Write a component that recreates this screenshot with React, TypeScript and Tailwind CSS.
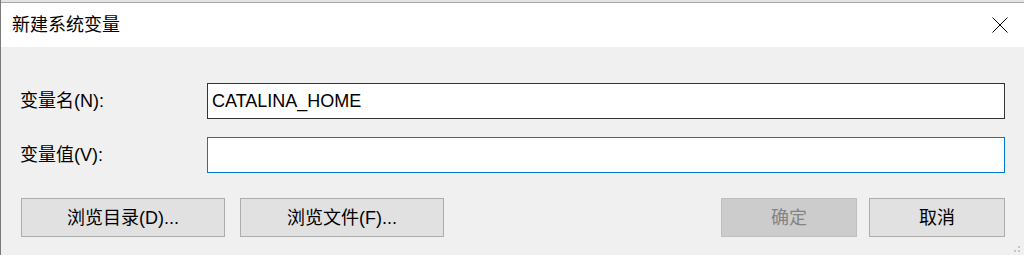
const font = { fontFamily: '"Liberation Sans", "Noto Sans CJK SC", sans-serif' };

const Btn = ({ label, w, disabled }: { label: string; w: string; disabled?: boolean }) => (
  <button
    className={
      disabled
        ? `${w} h-[39px] border border-[#bfbfbf] bg-[#cccccc] text-[#838383] text-[18px] leading-none`
        : `${w} h-[39px] border border-[#adadad] bg-[#e1e1e1] text-black text-[18px] leading-none`
    }
  >
    {label}
  </button>
);

export default function App() {
  return (
    <div
      className="relative w-[1024px] h-[255px] overflow-hidden bg-[#f0f0f0] border-l border-[#7a7a7a]"
      style={font}
    >
      {/* strip of the window behind */}
      <div className="h-[2px] bg-[#e4e4e4] border-b border-[#a8a8a8] box-content" />

      {/* Title bar */}
      <div className="h-[44px] bg-white flex items-center justify-between pl-[11px] pr-[16px]">
        <span className="text-[18px] text-black">新建系统变量</span>
        <svg width="16" height="16" viewBox="0 0 16 16" className="mr-[0px]">
          <path d="M0.5 0.5 L15.5 15.5 M15.5 0.5 L0.5 15.5" stroke="#000" strokeWidth="1" fill="none" />
        </svg>
      </div>

      {/* Body */}
      <div className="pt-[36px] pl-[19px] pr-[19px] flex flex-col">
        <div className="flex items-center h-[36px]">
          <span className="w-[187px] text-[18px] text-black">变量名(N):</span>
          <div className="flex-1 h-[36px] bg-white border border-[#333333] flex items-center pl-[4px] text-[18px] text-black">
            CATALINA_HOME
          </div>
        </div>
        <div className="flex items-center h-[36px] mt-[18px]">
          <span className="w-[187px] text-[18px] text-black">变量值(V):</span>
          <div className="flex-1 h-[36px] bg-white border border-[#0078d7]" />
        </div>
        <div className="flex items-center mt-[25px] pl-[1px]">
          <div className="flex gap-[15px]">
            <Btn label="浏览目录(D)..." w="w-[204px]" />
            <Btn label="浏览文件(F)..." w="w-[204px]" />
          </div>
          <div className="ml-auto flex gap-[12px] mr-[0px]">
            <Btn label="确定" w="w-[136px]" disabled />
            <Btn label="取消" w="w-[136px]" />
          </div>
        </div>
      </div>

      {/* resize grip */}
      <svg className="absolute right-[3px] bottom-[1px]" width="8" height="8" viewBox="0 0 8 8">
        <rect x="5" y="0" width="2" height="2" fill="#c4c4c4" />
        <rect x="1" y="4" width="2" height="2" fill="#c4c4c4" />
        <rect x="5" y="4" width="2" height="2" fill="#c4c4c4" />
      </svg>
    </div>
  );
}
